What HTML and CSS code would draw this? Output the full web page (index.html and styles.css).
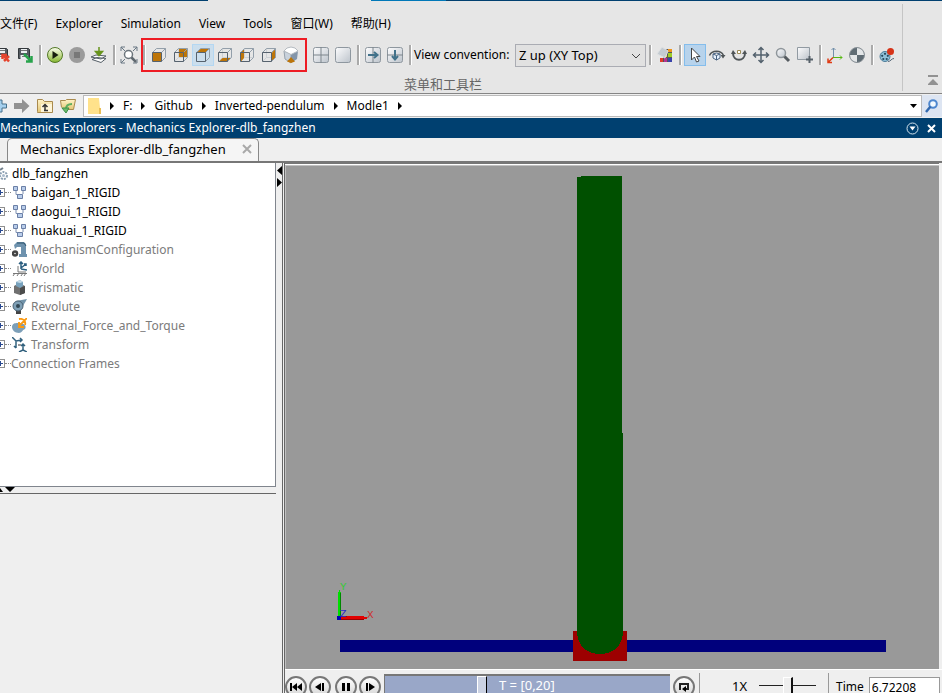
FILE: index.html
```html
<!DOCTYPE html>
<html lang="zh-CN">
<head>
<meta charset="utf-8">
<title>Mechanics Explorers - Mechanics Explorer-dlb_fangzhen</title>
<link rel="stylesheet" href="styles.css">
</head>
<body>
<svg class="defs" aria-hidden="true">
  <defs>
    <linearGradient id="silver" x1="0" y1="0" x2="1" y2="1"><stop offset="0" stop-color="#fdfdfe"/><stop offset="1" stop-color="#bcc3cb"/></linearGradient>
    <linearGradient id="go" x1="0" y1="0" x2="0" y2="1"><stop offset="0" stop-color="#fbfdf0"/><stop offset=".5" stop-color="#c4dc91"/><stop offset="1" stop-color="#83b52c"/></linearGradient>
    <linearGradient id="folder" x1="0" y1="0" x2="0" y2="1"><stop offset="0" stop-color="#fff3c8"/><stop offset="1" stop-color="#e4c775"/></linearGradient>
    <g id="cube" fill="none"><path d="M1.500 5.500l4-4h9v9l-4 4M10.500 5.500l4-4" stroke="#939faa"/><path d="M1.500 5.500h9v9h-9z" stroke="#56626e"/></g>
    <path id="cube-back" d="M5.500 1.500v9h9M5.500 10.500l-4 4" fill="none" stroke="#cdd1d5"/>
    <g id="block"><path d="M4 6v3.500h5M11 6v3" fill="none" stroke="#7d8fb0"/><path d="M1.500 1.500h4v4h-4zM9.500 1.500h4v4h-4zM5.500 9.500h5v4h-5z" fill="#b9cdea" stroke="#6b7fa6"/></g>
    <g id="disk"><path d="M1.500 1.500h10l1 1v9h-11z" fill="#555b61" stroke="#33383c"/><path d="M4 2h6v4H4zM3.500 8h7v4h-7z" fill="#eceff1"/><path d="M4 3.500h6M5 9.500h4" stroke="#777"/></g>
    <g id="pane"><rect x=".5" y=".5" width="15" height="15" rx="2" fill="url(#silver)" stroke="#8e979f"/></g>
  </defs>
</svg>

<header class="toolstrip">
  <div class="window-edge"><i class="edge-dark"></i><i class="edge-gap"></i><i class="edge-blue"></i><i class="edge-rest"></i></div>
  <div class="strip-body">
    <div class="strip-main">
      <nav class="menu">
        <button>文件(F)</button><button>Explorer</button><button>Simulation</button><button>View</button><button>Tools</button><button>窗口(W)</button><button>帮助(H)</button>
      </nav>
      <div class="toolbar">
        <button class="tool" aria-label="Remove saved view"><svg viewBox="0 0 16 16"><use href="#disk"/><path d="M8 8l6 6.500M14 9l-5 5M7.500 12V8H12" fill="none" stroke="#e5432d" stroke-width="2.500"/></svg></button>
        <button class="tool" aria-label="Save"><svg viewBox="0 0 16 16"><use href="#disk"/><path d="M7 7l7 7M14.500 9v5.500H9" fill="none" stroke="#27a34b" stroke-width="2.500"/></svg></button>
        <span class="sep"></span>
        <button class="tool" aria-label="Play"><svg viewBox="0 0 16 16"><circle cx="8" cy="8" r="7.500" fill="url(#go)" stroke="#537927"/><path d="M5.500 4v8l6-4z" fill="#161d0e"/></svg></button>
        <button class="tool" aria-label="Stop"><svg viewBox="0 0 16 16"><circle cx="8" cy="8" r="8" fill="#9b9b9b"/><path d="M5 5h6v6H5z" fill="#787878"/></svg></button>
        <button class="tool" aria-label="Update"><svg viewBox="0 0 16 16"><path d="M1 12.500l5-2 9 1-5 4zM0 10l5-2 10 1-5 3z" fill="#fff" stroke="#555f67"/><path d="M8 0v7M4.500 4.500L8 8.500l3.500-4z" fill="#67941c" stroke="#67941c" stroke-width="1.500"/></svg></button>
        <span class="sep"></span>
        <button class="tool" aria-label="Fit to view"><svg viewBox="0 0 16 16"><path d="M0 4V0h4M0 0l4 4M12 0h4v4M16 0l-4 4M0 12v4h4M0 16l4-4M12 16h4v-4" fill="none" stroke="#687783"/><circle cx="7.500" cy="7.500" r="4" fill="#fff" stroke="#6c757c" stroke-width="1.500"/><path d="M10.500 10.500L15 15" stroke="#606970" stroke-width="2.500"/></svg></button>
        <span class="sep"></span>
        <div class="view-group">
          <button class="tool" aria-label="Front view"><svg viewBox="0 0 16 16"><path d="M2 6h8v8H2z" fill="#bd7509"/><use href="#cube"/></svg></button>
          <button class="tool" aria-label="Back view"><svg viewBox="0 0 16 16"><use href="#cube-back"/><path d="M6 2h8v8H6z" fill="#bd7509"/><use href="#cube"/></svg></button>
          <button class="tool hover" aria-label="Top view"><svg viewBox="0 0 16 16"><path d="M2 5.500L5.500 2H14l-3.500 3.500z" fill="#bd7509"/><use href="#cube"/></svg></button>
          <button class="tool" aria-label="Bottom view"><svg viewBox="0 0 16 16"><use href="#cube-back"/><path d="M2 14.500L5.500 11H14l-3.500 3.500z" fill="#bd7509"/><use href="#cube"/></svg></button>
          <button class="tool" aria-label="Left view"><svg viewBox="0 0 16 16"><use href="#cube-back"/><path d="M2 5.500L5 2v9l-3 3.500z" fill="#bd7509"/><use href="#cube"/></svg></button>
          <button class="tool" aria-label="Right view"><svg viewBox="0 0 16 16"><use href="#cube-back"/><path d="M11 5.500L14.500 2v8.500L11 14z" fill="#bd7509"/><use href="#cube"/></svg></button>
          <button class="tool" aria-label="Isometric view"><svg viewBox="0 0 16 16"><path d="M1 4l7 3v9l-6-4z" fill="#c9d2dc" stroke="#97a2ad"/><path d="M15 4L8 7v9l6-4z" fill="#8496aa"/><path d="M1 4l3-3 4-1 4 1 3 3-7 3.500z" fill="#fff" stroke="#b4bac0"/><path d="M8 10l4 4.500L8 16l-4-1.500z" fill="#bd7509"/></svg></button>
        </div>
        <span class="gap"></span>
        <button class="tool" aria-label="Four views"><svg viewBox="0 0 16 16"><use href="#pane"/><path d="M8 0v16M0 8h16" stroke="#7d858c"/></svg></button>
        <button class="tool" aria-label="Single view"><svg viewBox="0 0 16 16"><use href="#pane"/></svg></button>
        <span class="sep"></span>
        <button class="tool" aria-label="Split vertically"><svg viewBox="0 0 16 16"><use href="#pane"/><path d="M8 0v16" stroke="#7d858c"/><path d="M3 8h9M9 5l3.500 3L9 11" fill="none" stroke="#41718a" stroke-width="2"/></svg></button>
        <button class="tool" aria-label="Split horizontally"><svg viewBox="0 0 16 16"><use href="#pane"/><path d="M0 8h16" stroke="#7d858c"/><path d="M8 3v9M5 9l3 3.500L11 9" fill="none" stroke="#41718a" stroke-width="2"/></svg></button>
        <span class="sep"></span>
        <label class="convention" for="convention">View convention:</label>
        <span class="select-wrap">
          <select id="convention"><option>Z up (XY Top)</option></select>
          <svg viewBox="0 0 10 6"><path d="M1 1l4 4 4-4" fill="none" stroke="#444"/></svg>
        </span>
        <span class="sep"></span>
        <button class="tool" aria-label="Visual properties"><svg viewBox="0 0 16 16"><path d="M6 2h9v13H6z" fill="#555"/><path d="M11 2h4v3h-4z" fill="#ef941c"/><path d="M11 6h4v4h-4z" fill="#9ccd26"/><path d="M7 7h3v3H7z" fill="#f5dd2c"/><path d="M3 11h3v4H3z" fill="#e03c28"/><path d="M7 11h3v4H7z" fill="#b53292"/><path d="M11 11h4v4h-4z" fill="#3942aa"/><path d="M5 0l6 4-3 7-8-4z" fill="#c4cbd1" stroke="#dfe2e4"/></svg></button>
        <span class="sep"></span>
        <button class="tool active" aria-label="Select"><svg viewBox="0 0 16 16"><path d="M4.500 1v12l3-3 2 5 2.500-1-2.500-4.500H13z" fill="#fff" stroke="#444"/></svg></button>
        <button class="tool" aria-label="Rotate"><svg viewBox="0 0 16 16"><path d="M.5 8.500a7.500 6.500 0 0 1 14 0" fill="none" stroke="#4f5558" stroke-width="1.500"/><path d="M11.500 8h5L14 11.500z" fill="#4f5558"/><path d="M4 7l3.500-1L11 7v4l-3.500 2L4 11zM4 7l3.500 1.500L11 7M7.500 8.500V13" fill="#e8f3ff" stroke="#496381"/></svg></button>
        <button class="tool" aria-label="Roll"><svg viewBox="0 0 16 16"><path d="M2 6c0 9 12 9 12 0" fill="none" stroke="#4f5558" stroke-width="2"/><path d="M0 7l2-4 3 4zM11 7l3-4 2 4z" fill="#4f5558"/><path d="M6.500 3.500h3v3h-3z" fill="#fff" stroke="#9b8a56"/></svg></button>
        <button class="tool" aria-label="Pan"><svg viewBox="0 0 16 16"><path d="M8 1v14M1 8h14M5.500 3L8 .5 10.500 3M5.500 13L8 15.500l2.500-2.500M3 5.500L.5 8 3 10.500M13 5.500L15.500 8 13 10.500" fill="none" stroke="#53616d" stroke-width="1.500"/></svg></button>
        <button class="tool" aria-label="Zoom"><svg viewBox="0 0 16 16"><circle cx="6" cy="6" r="4.500" fill="url(#silver)" stroke="#8f969b" stroke-width="1.500"/><path d="M9.500 9.500L14 14" stroke="#555b60" stroke-width="3"/></svg></button>
        <button class="tool" aria-label="Zoom to region"><svg viewBox="0 0 16 16"><path d="M.5.500h12v12H.5z" fill="url(#silver)" stroke="#919aa2"/><path d="M12.500 9v7M9 12.500h7" stroke="#56616a" stroke-width="2"/></svg></button>
        <span class="sep"></span>
        <button class="tool" aria-label="Show frames"><svg viewBox="0 0 16 16"><path d="M6.500 10V1M4.500 3l2-2 2 2" fill="none" stroke="#7290ab"/><path d="M6 10.500h9M13 8.500l2 2-2 2" fill="none" stroke="#56b811"/><path d="M6 10.500L1.500 15M1 11.500V15.500H5" fill="none" stroke="#df3b14" stroke-width="1.500"/></svg></button>
        <button class="tool" aria-label="Show centers of mass"><svg viewBox="0 0 16 16"><circle cx="8" cy="8" r="7.500" fill="#5f6c74" stroke="#8a9298"/><path d="M8 8V1a7 7 0 0 1 7 7zM8 8v7a7 7 0 0 1-7-7z" fill="#e3e6e8"/></svg></button>
        <span class="sep"></span>
        <button class="tool" aria-label="Record"><svg viewBox="0 0 16 16"><circle cx="6" cy="9.500" r="5" fill="#8fc0d8" stroke="#4a7b98"/><path d="M9 14.500c3 0 3-3 6-3" fill="none" stroke="#567"/><g fill="#24485c"><circle cx="6" cy="6.800" r="1.100"/><circle cx="3.200" cy="8.800" r="1.100"/><circle cx="8.800" cy="8.800" r="1.100"/><circle cx="4.300" cy="12" r="1.100"/><circle cx="7.700" cy="12" r="1.100"/></g><circle cx="11.500" cy="4.500" r="3.500" fill="#d63318"/></svg></button>
      </div>
      <div class="caption">菜单和工具栏</div>
    </div>
    <div class="strip-end"><button class="plain" aria-label="Collapse toolstrip"><svg width="10" height="11" viewBox="0 0 10 11"><path d="M0 0h10v2H0zM5 4l5 5v1H0V9z" fill="#929292"/></svg></button></div>
  </div>
</header>

<div class="address">
  <button class="plain" aria-label="Back"><svg width="8" height="18" viewBox="0 0 8 18"><path d="M0 3l2 0v4h4.500v4H2v4H0" fill="#a5d0ee" stroke="#47718c"/></svg></button>
  <button class="plain forward" aria-label="Forward"><svg width="16" height="16" viewBox="0 0 16 16"><path d="M0 5h8V1l7.500 7L8 15v-4H0z" fill="#929292"/></svg></button>
  <button class="plain up" aria-label="Up one level"><svg width="16" height="16" viewBox="0 0 16 16"><path d="M.5 13.500v-12h5l2 2h8v11H.5z" fill="url(#folder)" stroke="#a98a4e"/><path d="M4 6h11v8H4z" fill="#fff6d9"/><path d="M8 13V7M5.500 9L8 6.500 10.500 9M7 12.500h4" fill="none" stroke="#333" stroke-width="1.500"/></svg></button>
  <button class="plain browse" aria-label="Browse for folder"><svg width="16" height="16" viewBox="0 0 16 16"><path d="M1.500 9.500l-1-7h5l1-1h9l-2 10H8" fill="url(#folder)" stroke="#a98a4e"/><path d="M12 6c-4 0-6 1-6 5" fill="none" stroke="#5fae5f" stroke-width="2"/><path d="M2 10h7l-3 5z" fill="#6cba68" stroke="#3d8f47"/></svg></button>
  <div class="path">
    <svg class="path-folder" width="13" height="16" viewBox="0 0 13 16"><path d="M0 0h11l1 10h1v6H0z" fill="#ffe28b"/><path d="M11 10h2v6h-2z" fill="#e9be57"/></svg>
    <i class="crumb"></i><a href="#">F:</a><i class="crumb"></i><a href="#">Github</a><i class="crumb"></i><a href="#">Inverted-pendulum</a><i class="crumb"></i><a href="#">Modle1</a><i class="crumb"></i>
    <button class="plain path-drop" aria-label="Path history"><svg width="7" height="4" viewBox="0 0 7 4"><path d="M0 0h7L3.500 4z"/></svg></button>
  </div>
  <button class="search" aria-label="Search"><svg width="14" height="14" viewBox="0 0 14 14"><circle cx="8" cy="5" r="3.800" fill="#f3faff" stroke="#4e87ce" stroke-width="2"/><path d="M5.500 7.500L1 13" stroke="#3269af" stroke-width="2.500"/></svg></button>
</div>

<div class="titlebar">
  <span>Mechanics Explorers - Mechanics Explorer-dlb_fangzhen</span>
  <button class="plain" aria-label="Window actions"><svg width="13" height="13" viewBox="0 0 13 13"><circle cx="6.500" cy="6.500" r="5.500" fill="none" stroke="#d6e4ee"/><path d="M3.500 4.500h6l-3 4z" fill="#fff"/></svg></button>
  <button class="plain" aria-label="Close"><svg width="9" height="9" viewBox="0 0 9 9"><path d="M1 1l7 7M8 1L1 8" stroke="#fff" stroke-width="2"/></svg></button>
</div>

<div class="tabs">
  <div class="tab"><span>Mechanics Explorer-dlb_fangzhen</span><button class="plain" aria-label="Close tab"><svg width="10" height="10" viewBox="0 0 10 10"><path d="M1 1l8 8M9 1L1 9" stroke="#a9a9a9" stroke-width="2"/></svg></button></div>
</div>

<main class="workspace">
  <aside class="side">
    <ul class="tree">
      <li class="root"><svg width="8" height="14" viewBox="0 0 8 14"><circle cx="3.500" cy="8.500" r="3.500" fill="none" stroke="#8ca0b3" stroke-width="2" stroke-dasharray="2 1"/><circle cx="3.500" cy="8.500" r="1.500" fill="#a9bacb"/><path d="M0 3l3-2" stroke="#73808c" stroke-width="2"/></svg><span>dlb_fangzhen</span></li>
      <li><button class="expand" aria-label="Expand"></button><svg class="node" viewBox="0 0 15 15"><use href="#block"/></svg><span>baigan_1_RIGID</span></li>
      <li><button class="expand" aria-label="Expand"></button><svg class="node" viewBox="0 0 15 15"><use href="#block"/></svg><span>daogui_1_RIGID</span></li>
      <li><button class="expand" aria-label="Expand"></button><svg class="node" viewBox="0 0 15 15"><use href="#block"/></svg><span>huakuai_1_RIGID</span></li>
      <li class="dim"><button class="expand" aria-label="Expand"></button><svg class="node" viewBox="0 0 15 15"><path d="M2 3l3-3h7l2 2v10h1v3H7v-3h2V5H5L3 7z" fill="#6e92ae"/><path d="M5 1h7l2 3" fill="none" stroke="#31566f"/><circle cx="3" cy="11.500" r="2" fill="#fff" stroke="#444" stroke-width="2.500"/></svg><span>MechanismConfiguration</span></li>
      <li class="dim"><button class="expand" aria-label="Expand"></button><svg class="node" viewBox="0 0 15 15"><path d="M9 8V1M7 3l2-2 2 2M9 8l6 1M9 7l5-4M12 3h2v2" fill="none" stroke="#2c5f80" stroke-width="1.500"/><path d="M6 5v6h8M1 12.500h14M3 12l-2 3M7 12l-2 3M11 12l-2 3M14 12l-2 3" fill="none" stroke="#777"/></svg><span>World</span></li>
      <li class="dim"><button class="expand" aria-label="Expand"></button><svg class="node" viewBox="0 0 15 15"><path d="M2 6l5-3 6 3v7l-5 2-6-2z" fill="#707070"/><path d="M8 8l5-2v7l-5 2z" fill="#4c4c4c"/><path d="M4 2l4-2 3 2v4L8 8 4 6z" fill="#78a2bd"/><path d="M4 2l4 1 3-1-3-2z" fill="#c4dbe9"/></svg><span>Prismatic</span></li>
      <li class="dim"><button class="expand" aria-label="Expand"></button><svg class="node" viewBox="0 0 15 15"><path d="M4 10h5v5H4z" fill="#444"/><path d="M4 2l11-2-4 7z" fill="#7193aa"/><circle cx="6" cy="7" r="5" fill="#7fa0b6" stroke="#4b6273"/><circle cx="6" cy="7" r="2" fill="#314653"/></svg><span>Revolute</span></li>
      <li class="dim"><button class="expand" aria-label="Expand"></button><svg class="node" viewBox="0 0 15 15"><path d="M0 9c0-5 6-4 7-4 5 0 8 3 6 6-3 1-3 4-6 4-4 0-7-3-7-6z" fill="#7c9fb8"/><path d="M15 0L7 8M7 4v5h5M7 1c5-1 7 3 6 6" fill="none" stroke="#fa9911" stroke-width="1.800"/></svg><span>External_Force_and_Torque</span></li>
      <li class="dim"><button class="expand" aria-label="Expand"></button><svg class="node" viewBox="0 0 15 15"><path d="M0 0l4 4 6-1M4 4v7M2 9l2 2M8 1l2 2-2 2M11 8v5l-4 2M11 13l4 2M9 9l2-2 2 2" fill="none" stroke="#32617e" stroke-width="1.500"/><path d="M6 8h3" stroke="#999" stroke-width="2"/></svg><span>Transform</span></li>
      <li class="dim"><button class="expand" aria-label="Expand"></button><span>Connection Frames</span></li>
    </ul>
    <div class="divider"><svg width="16" height="5" viewBox="0 0 16 5"><path d="M0 1l3 4H0zM5 0h10l-5 5z"/></svg></div>
    <div class="details"></div>
  </aside>
  <div class="splitter"><svg width="5" height="21" viewBox="0 0 5 21"><path d="M5 0v9L0 4.500zM0 12v9l5-4.500z"/></svg></div>
  <section class="explorer">
    <svg class="scene" viewBox="0 0 653 503" preserveAspectRatio="xMidYMin meet" shape-rendering="crispEdges" role="img" aria-label="Pendulum model">
      <path d="M54 474h546v12H54z" fill="#00007c"/>
      <path d="M287 465h54v30h-54z" fill="#9d0000"/>
      <path d="M291 11h4v-1h41v257h1v198c0 13-8 23-23 23s-23-10-23-23z" fill="#005000"/>
      <path d="M52 426h3v25h-3z" fill="#0d0"/><path d="M53 424h1v2h-1z" fill="#0d0"/><path d="M54 427h1v24h-1z" fill="#080"/>
      <path d="M54 450h24v4H54zM78 451h3v2h-3z" fill="#e10000"/><path d="M54 453h24v1H54z" fill="#900"/>
      <path d="M51 450h4v4h-4z" fill="#0000b4"/>
      <g class="axis"><text x="54" y="424" fill="#35ca35">Y</text><text x="54" y="451" fill="#2929c8">Z</text><text x="81" y="452" fill="#cc3030">X</text></g>
    </svg>
    <div class="playback">
      <div class="transport">
        <button class="round" aria-label="Go to start"><svg viewBox="0 0 12 10"><path d="M0 1h2v8H0zM7 1v8L2 5zM12 1v8L7 5z"/></svg></button>
        <button class="round" aria-label="Step back"><svg viewBox="0 0 12 10"><path d="M7 1v8L1 5zM8 1h2v8H8z"/></svg></button>
        <button class="round pause" aria-label="Pause"><svg viewBox="0 0 12 10"><path d="M2 1h3v8H2zM7 1h3v8H7z"/></svg></button>
        <button class="round" aria-label="Step forward"><svg viewBox="0 0 12 10"><path d="M2 1h2v8H2zM5 1v8l6-4z"/></svg></button>
      </div>
      <div class="timeline"><input type="range" min="0" max="20" step="any" value="6.72208" aria-label="Simulation time"><span>T = [0,20]</span></div>
      <button class="round loop" aria-label="Loop"><svg viewBox="0 0 12 10"><path d="M3 7H2V2h8v5H8" fill="none" stroke="#222" stroke-width="2"/><path d="M8 4v6L4 7z"/></svg></button>
      <div class="speed"><label for="speed">1X</label><input id="speed" type="range" min="0" max="100" value="50"></div>
      <div class="time"><label for="time">Time</label><input id="time" type="text" value="6.72208"></div>
    </div>
  </section>
</main>
</body>
</html>
```
FILE: styles.css
```css
* { box-sizing: border-box; }
body {
  margin: 0;
  height: 100vh;
  overflow: hidden;
  display: flex;
  flex-direction: column;
  background: #efefef;
  color: #000;
  font: 12px/18px "Noto Sans", "Noto Sans CJK SC", sans-serif;
}
button, input, select { font: inherit; color: inherit; }
button { padding: 0; border: 0; background: none; }
svg { display: block; flex: none; }
.defs { position: absolute; width: 0; height: 0; }
.plain { display: flex; align-items: center; justify-content: center; flex: none; }

/* Toolstrip */
.toolstrip { flex: none; background: #e6e6e6; border-bottom: 1px solid #858585; }
.window-edge { display: flex; height: 1px; }
.edge-dark { flex: 0 0 208px; background: #004070; }
.edge-gap { flex: 0 0 163px; }
.edge-blue { flex: 0 0 75px; background: #0078b8; }
.edge-rest { flex: 1; background: #004070; }
.strip-body { display: flex; height: 92px; }
.strip-main { flex: 1; min-width: 0; overflow: hidden; }
.menu { display: flex; gap: 18px; padding-top: 13px; height: 41px; }
.menu button { height: 20px; white-space: nowrap; }
.toolbar { display: flex; align-items: center; height: 26px; margin-left: -8px; }
.tool { flex: 0 0 22px; height: 22px; display: flex; align-items: center; justify-content: center; }
.tool svg { width: 16px; height: 16px; overflow: visible; }
.tool.hover { background: #cbdeed; outline: 1px solid #b4d7f2; outline-offset: -1px; }
.tool.active { background: #b7d3ec; outline: 1px solid #84bdec; outline-offset: -1px; }
.sep { flex: 0 0 8px; height: 20px; display: flex; justify-content: center; }
.sep::before { content: ""; width: 2px; background: #aaa; border-right: 1px solid #fff; }
.gap { flex: 0 0 8px; }
.view-group { display: flex; position: relative; }
.view-group::after {
  content: "";
  position: absolute;
  inset: -6px -5px -6px -7px;
  border: 2px solid #ee1c24;
  pointer-events: none;
}
.convention { flex: 0 0 101px; white-space: nowrap; }
.select-wrap { position: relative; flex: 0 0 131px; font-size: 13px; }
.select-wrap select {
  appearance: none;
  display: block;
  width: 100%;
  height: 23px;
  padding: 0 3px;
  border: 1px solid #aaacb3;
  border-radius: 0;
  background: #e1e1e1;
}
.select-wrap svg { position: absolute; right: 5px; top: 9px; width: 10px; height: 6px; }
.caption { padding: 8px 16px 0 0; text-align: center; color: #666; font-size: 13px; line-height: 16px; }
.strip-end { flex: 0 0 40px; margin: 3px 0 2px; border-left: 1px solid #c5c5c5; display: flex; align-items: flex-end; justify-content: flex-end; padding: 0 4px 5px; }

/* Current folder */
.address { flex: none; display: flex; align-items: center; height: 24px; background: #efefef; }
.forward { margin-left: 6px; }
.up { margin-left: 7px; }
.browse { margin-left: 7px; margin-right: 7px; }
.path { flex: 1; display: flex; align-items: center; height: 22px; padding: 0 4px; border: 1px solid #bbb; border-right: 0; background: #fff; }
.path a { color: inherit; text-decoration: none; white-space: nowrap; }
.crumb { border: solid transparent; border-width: 4px 0 4px 4px; border-left-color: #000; margin: 0 9px; }
.path-drop { margin-left: auto; }
.search { flex: 0 0 21px; height: 22px; display: flex; align-items: center; justify-content: center; border-left: 1px solid #bbb; background: #dde5f2; }

/* Window title and tabs */
.titlebar { flex: none; display: flex; align-items: center; gap: 8px; height: 20px; padding-right: 6px; background: #004070; color: #fff; }
.titlebar span { flex: 1; white-space: nowrap; }
.tabs { flex: none; display: flex; height: 25px; padding-left: 7px; border-bottom: 2px solid #777; font-size: 13px; }
.tab { display: flex; align-items: center; gap: 16px; padding: 0 6px 2px 12px; border: 1px solid #888; border-bottom: 0; border-radius: 5px 5px 0 0; background: #f5f5f5; white-space: nowrap; }

/* Panels */
.workspace { flex: 1; min-height: 0; display: flex; }
.side { flex: 0 0 276px; display: flex; flex-direction: column; }
.tree { flex: 324 1 0; margin: 0; padding: 1px 0 0; list-style: none; overflow: hidden; background: #fff; border: solid #80858d; border-width: 0 1px 1px 0; }
.tree li { display: flex; align-items: center; height: 19px; white-space: nowrap; }
.tree .root { gap: 4px; }
.node { width: 15px; height: 15px; margin-right: 4px; }
.dim { color: #7b7b7b; }
.expand { position: relative; flex: 0 0 5px; height: 9px; margin-right: 7px; border: solid #8f8f8f; border-width: 1px 1px 1px 0; background: linear-gradient(#2a4a91, #2a4a91) 0 3px / 3px 1px no-repeat, linear-gradient(#2a4a91, #2a4a91) 0 1px / 1px 5px no-repeat #fff; }
.expand::after { content: ""; position: absolute; left: 5px; top: 3px; width: 6px; border-top: 1px dotted #888; }
.expand + span { margin-left: -1px; }
.divider { flex: none; height: 7px; border-bottom: 1px solid #666; }
.details { flex: 200 1 0; }
.splitter { flex: 0 0 6px; padding: 3px 0 0 1px; }
.explorer { flex: 1; min-width: 0; display: flex; flex-direction: column; border-left: 3px double #666; }
.scene { flex: 1 1 0; min-height: 0; width: calc(100% - 3px); margin: 2px 2px 0 0; border: solid #c0c0c0; border-width: 1px 0 0 1px; box-shadow: 0 -1px #fff, 0 -2px #777; background: #999; }
.axis { font: 11px "Liberation Mono", monospace; }

/* Playback */
.playback { flex: none; display: flex; height: 24px; border-top: 1px solid #fff; overflow: hidden; white-space: nowrap; font-size: 13px; }
.transport { display: flex; gap: 2px; padding-top: 6px; }
.round { flex: none; width: 22px; height: 22px; display: flex; align-items: center; justify-content: center; border: 2px solid #777; border-radius: 50%; background: linear-gradient(#fff, #d5d5d5); }
.round svg { width: 12px; height: 10px; }
.pause { margin-left: 2px; }
.timeline { position: relative; flex: 1; min-width: 0; height: 28px; margin: 4px 3px 0 3px; border: solid #777; border-width: 2px 0 0 1px; background: #99a7c8; color: #fff; }
.timeline input { appearance: none; display: block; width: 100%; height: 26px; margin: 0; background: none; }
.timeline input::-webkit-slider-thumb { appearance: none; width: 10px; height: 26px; border: solid #fff; border-width: 1px 0 0 1px; border-right: 1px solid #000; background: #cbd2e3; }
.timeline span { position: absolute; left: 114px; top: 0; font-size: 13px; pointer-events: none; }
.loop { margin: 6px 4px 0 0; }
.speed { display: flex; gap: 12px; flex: 0 0 129px; margin-top: 3px; padding: 4px 0 0 32px; border-left: 1px solid #999; }
.speed input { appearance: none; width: 57px; height: 18px; margin: 0; background: linear-gradient(#222, #222) 0 8px / 100% 1px no-repeat; }
.speed input::-webkit-slider-thumb { appearance: none; width: 10px; height: 18px; border: solid #fff; border-width: 1px 0 0 1px; border-right: 2px solid #111; background: #eee; }
.time { display: flex; gap: 5px; flex: 0 0 114px; min-width: 0; margin-top: 3px; padding: 4px 2px 0 7px; border-left: 1px solid #999; }
.time label { font-size: 12px; line-height: 20px; }
.time input { flex: 1; min-width: 0; height: 20px; padding: 0 2px; border: 1px solid #999; background: #fff; font-size: 12px; }
```
